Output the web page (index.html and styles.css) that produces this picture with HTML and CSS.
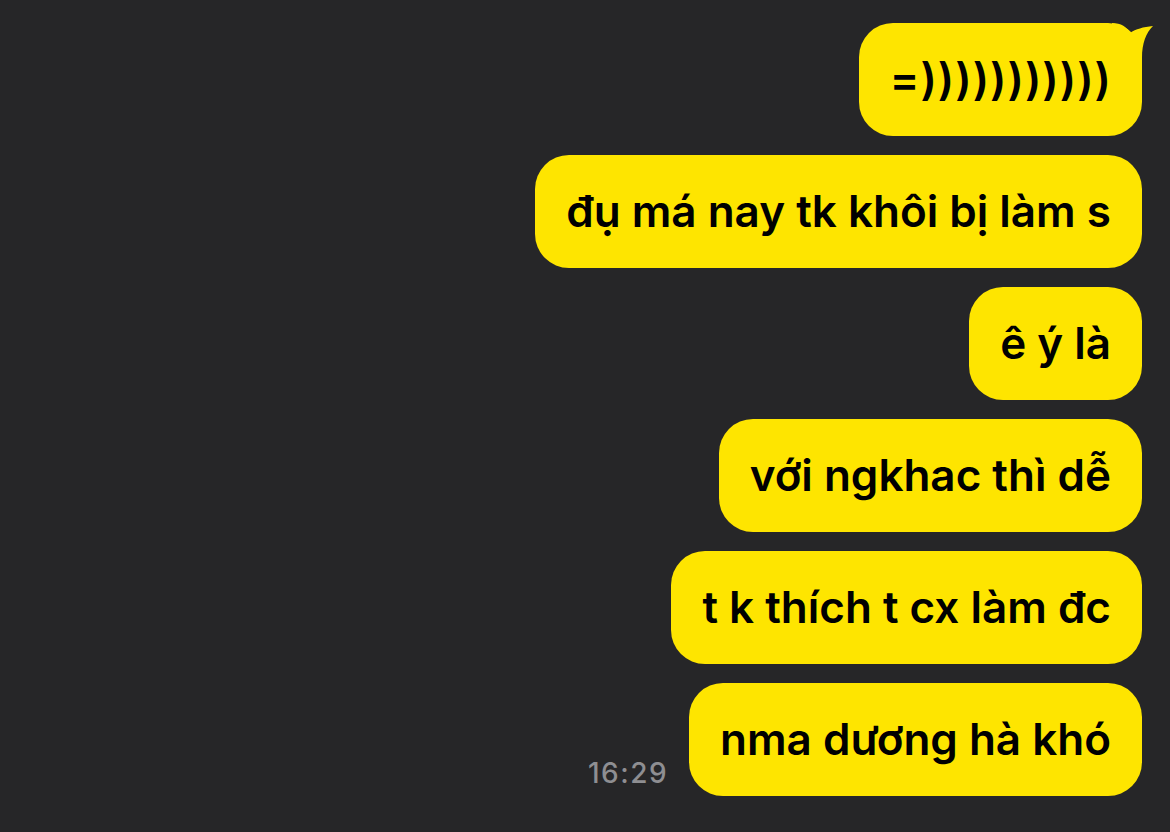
FILE: index.html
```html
<!DOCTYPE html>
<html lang="vi">
<head>
<meta charset="utf-8">
<link rel="stylesheet" href="styles.css">
</head>
<body>
<div class="chat">
  <div class="row">
    <div class="bubble first">=)))))))))))
      <svg class="tail" width="42" height="50" viewBox="0 0 42 50"><path d="M0 0 C9 0 15 4 18 10 C24 6 31 4 41 3 C34 10 30 20 30 35 L30 50 L0 50 Z" fill="#fee500"/></svg>
    </div>
  </div>
  <div class="row"><div class="bubble">đụ má nay tk khôi bị làm s</div></div>
  <div class="row"><div class="bubble">ê ý là</div></div>
  <div class="row"><div class="bubble">với ngkhac thì dễ</div></div>
  <div class="row"><div class="bubble">t k thích t cx làm đc</div></div>
  <div class="row"><span class="time">16:29</span><div class="bubble">nma dương hà khó</div></div>
</div>
</body>
</html>
```
FILE: styles.css
```css
html, body {
  margin: 0;
  padding: 0;
  background: #262628;
  height: 100%;
}
.chat {
  display: flex;
  flex-direction: column;
  align-items: flex-end;
  gap: 19px;
  padding: 23px 28px 0 0;
}
.row {
  display: flex;
  align-items: flex-end;
  gap: 21px;
}
.bubble {
  position: relative;
  background: #fee500;
  color: #000;
  font-family: Inter, "Noto Sans", sans-serif;
  font-weight: 600;
  font-size: 44px;
  line-height: 113px;
  height: 113px;
  padding: 0 31px;
  border-radius: 34px;
  white-space: nowrap;
  letter-spacing: 0;
}
.tail {
  position: absolute;
  right: -12px;
  top: 0;
}
.first {
  letter-spacing: 1px;
  padding-right: 30px;
}
.time {
  font-family: Inter, "Noto Sans", sans-serif;
  font-size: 28px;
  font-weight: 500;
  letter-spacing: 1.5px;
  color: #8e8e92;
  margin-bottom: 6px;
  line-height: 34px;
}
```
